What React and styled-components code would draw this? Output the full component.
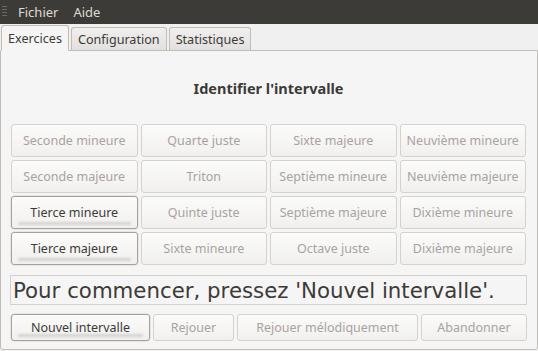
import styled, { createGlobalStyle } from "styled-components"

const GlobalStyle = createGlobalStyle`
    html, body {
        margin: 0;
        padding: 0;
        background: #f0f0f0;
    }
    body {
        font-family: "Noto Sans", "DejaVu Sans", sans-serif;
        font-size: 12.5px;
        color: #3c3b37;
    }
`

const Window = styled.div`
    width: 538px;
    height: 351px;
    background: #f0f0f0;
    display: flex;
    flex-direction: column;
    overflow: hidden;
`

const MenuBar = styled.div`
    height: 24px;
    background: #3c3b37;
    display: flex;
    align-items: center;
    padding-left: 2px;
    flex-shrink: 0;
`

const Grip = styled.svg`
    width: 6px;
    height: 14px;
    margin-right: 10px;
`

const MenuItem = styled.span`
    color: #dfdbd2;
    font-size: 13px;
    margin-right: 15px;
`

const TabBar = styled.div`
    height: 26px;
    display: flex;
    align-items: flex-end;
    padding-left: 1px;
    gap: 2px;
    position: relative;
    z-index: 1;
    flex-shrink: 0;
`

const Tab = styled.div`
    box-sizing: border-box;
    height: ${p => (p.active ? "26px" : "23px")};
    padding: 0 6px;
    display: flex;
    align-items: center;
    border: 1px solid #c2bcb5;
    border-bottom: ${p => (p.active ? "1px solid #f5f5f5" : "none")};
    border-radius: 3px 3px 0 0;
    background: ${p => (p.active ? "#f5f5f5" : "linear-gradient(#f0efee, #e2e1df)")};
    color: #3c3b37;
    font-size: 12.6px;
    margin-bottom: ${p => (p.active ? "-1px" : "0")};
`

const Panel = styled.div`
    box-sizing: border-box;
    height: 300px;
    border: 1px solid #c2bcb5;
    border-radius: 0 0 3px 3px;
    background: #f5f5f5;
    padding: 0 10px 0 9px;
    display: flex;
    flex-direction: column;
`

const Title = styled.div`
    padding-top: 27px;
    line-height: 20px;
    text-align: center;
    font-weight: bold;
    font-size: 14.5px;
    color: #3c3b37;
`

const Grid = styled.div`
    margin-top: 26px;
    padding: 0 1px;
    display: grid;
    grid-template-columns: repeat(4, 1fr);
    grid-auto-rows: 33px;
    gap: 3px;
`

const Button = styled.div`
    position: relative;
    box-sizing: border-box;
    display: flex;
    align-items: center;
    justify-content: center;
    white-space: nowrap;
    border: 1px solid ${p => (p.enabled ? "#a8a19b" : "#d6d1cc")};
    border-radius: 3px;
    background: linear-gradient(#fbfbfa, #f1f0ef);
    color: ${p => (p.enabled ? "#3c3b37" : "#aaa2a0")};
    font-size: 12.5px;
    box-shadow: ${p => (p.enabled ? "0 0 0 0.5px #dcd8d4" : "none")};

    &::after {
        content: "";
        display: ${p => (p.enabled ? "block" : "none")};
        position: absolute;
        left: 6px;
        right: 6px;
        bottom: 3px;
        height: 3px;
        border-radius: 2px;
        background: #d5d3d0;
        filter: blur(1px);
    }
`

const Status = styled.div`
    box-sizing: border-box;
    margin-top: 10px;
    height: 30px;
    border: 1px solid #d6d0ca;
    background: #f5f5f5;
    display: flex;
    align-items: center;
    padding-left: 2px;
    font-family: "DejaVu Sans", sans-serif;
    font-size: 21.3px;
    color: #3c3b37;
    white-space: nowrap;
    overflow: hidden;
`

const Actions = styled.div`
    margin-top: 9px;
    padding-left: 1px;
    display: grid;
    grid-template-columns: 139px 81px 181px 1fr;
    grid-auto-rows: 27px;
    gap: 3px;
`

const intervals = [
    ["Seconde mineure", "Quarte juste", "Sixte majeure", "Neuvième mineure"],
    ["Seconde majeure", "Triton", "Septième mineure", "Neuvième majeure"],
    ["Tierce mineure", "Quinte juste", "Septième majeure", "Dixième mineure"],
    ["Tierce majeure", "Sixte mineure", "Octave juste", "Dixième majeure"],
]

const enabledIntervals = ["Tierce mineure", "Tierce majeure"]

const App = () => {
    return (
        <>
            <GlobalStyle />
            <Window>
                <MenuBar>
                    <Grip viewBox="0 0 6 14">
                        {[1, 4, 7, 10].map(y => (
                            <rect key={y} x="0" y={y} width="5" height="1" fill="#6a6862" />
                        ))}
                    </Grip>
                    <MenuItem>Fichier</MenuItem>
                    <MenuItem>Aide</MenuItem>
                </MenuBar>
                <TabBar>
                    <Tab active>Exercices</Tab>
                    <Tab>Configuration</Tab>
                    <Tab>Statistiques</Tab>
                </TabBar>
                <Panel>
                    <Title>Identifier l'intervalle</Title>
                    <Grid>
                        {intervals.flat().map(name => (
                            <Button key={name} enabled={enabledIntervals.includes(name)}>
                                {name}
                            </Button>
                        ))}
                    </Grid>
                    <Status>Pour commencer, pressez 'Nouvel intervalle'.</Status>
                    <Actions>
                        <Button enabled>Nouvel intervalle</Button>
                        <Button>Rejouer</Button>
                        <Button>Rejouer mélodiquement</Button>
                        <Button>Abandonner</Button>
                    </Actions>
                </Panel>
            </Window>
        </>
    )
}

export default App
